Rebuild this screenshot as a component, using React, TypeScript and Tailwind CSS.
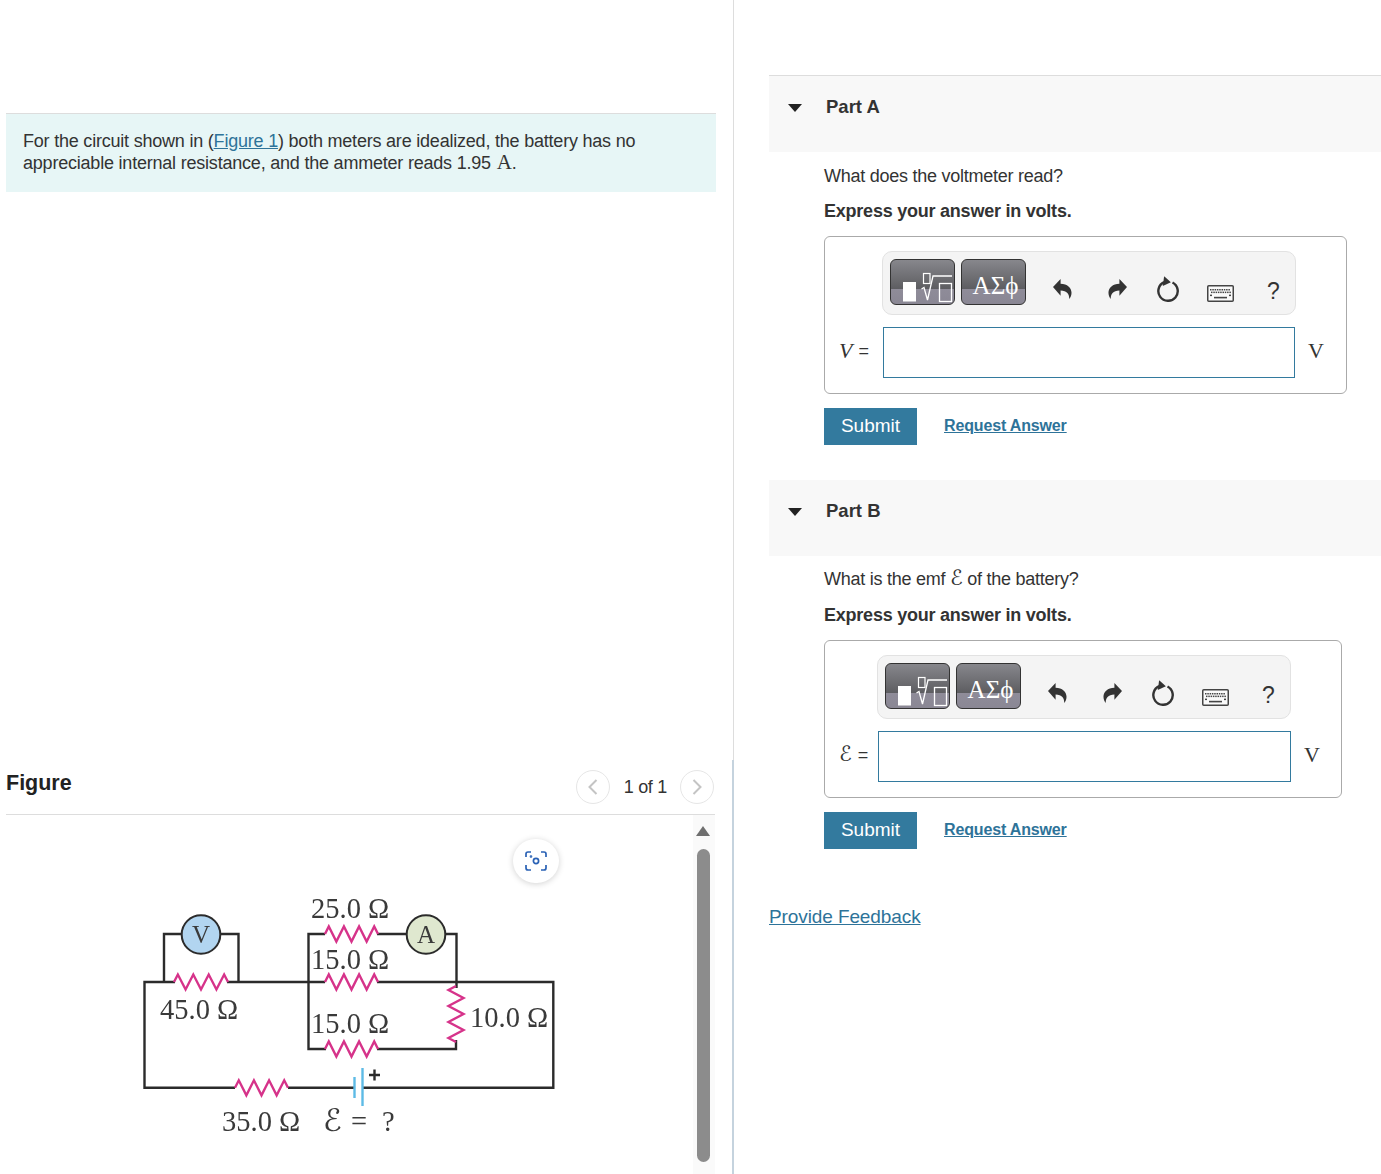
import React from "react";

const sans = "font-['Liberation_Sans',Arial,sans-serif]";
const serif = "font-['Liberation_Serif','DejaVu_Serif',serif]";
const script = "font-['DejaVu_Sans',serif]";

function zig(x0: number, x1: number, y: number, amp = 7.5) {
  const n = 7;
  const step = (x1 - x0) / n;
  let d = `M${x0} ${y}`;
  for (let i = 0; i < n; i++) {
    const x = x0 + step * (i + 0.5);
    d += ` L${x} ${i % 2 === 0 ? y - amp : y + amp}`;
  }
  d += ` L${x1} ${y}`;
  return d;
}
function vzig(y0: number, y1: number, x: number, amp = 7.5) {
  const n = 7;
  const step = (y1 - y0) / n;
  let d = `M${x} ${y0}`;
  for (let i = 0; i < n; i++) {
    const y = y0 + step * (i + 0.5);
    d += ` L${i % 2 === 0 ? x - amp : x + amp} ${y}`;
  }
  d += ` L${x} ${y1}`;
  return d;
}

function Circuit() {
  const wire = { stroke: "#2b2b2b", strokeWidth: 2.4, fill: "none" };
  const res = { stroke: "#d6338a", strokeWidth: 2.4, fill: "none" };
  const label = { fontFamily: "'Liberation Serif', serif", fontSize: 28.5, fill: "#3a3a3a" };
  return (
    <svg width="440" height="270" viewBox="0 0 440 270" className="block blur-[0.35px]">
      <path d="M45 102 H14.5 V207.8 H105 M158 207.8 H224 M232.5 207.8 H423.3 V102 H247" {...wire} />
      <path d="M97 102 H195 M34 102 V54 H52 M90 54 H108.5 V102" {...wire} />
      <path d="M195 54 H178.5 V169 H196 M247 169 H326 V160 M247 54 H277 M315 54 H326.5 V108" {...wire} />
      <path d={zig(44, 98, 102)} {...res} />
      <path d={zig(195, 248, 54)} {...res} />
      <path d={zig(195, 248, 102)} {...res} />
      <path d={zig(195, 248, 169)} {...res} />
      <path d={zig(105, 158, 207.8)} {...res} />
      <path d={vzig(106, 162, 326)} {...res} />
      <circle cx="71" cy="54.5" r="19.3" fill="#b2d5f0" stroke="#2b2b2b" strokeWidth="2" />
      <circle cx="296" cy="54.5" r="19.3" fill="#dfe8cf" stroke="#2b2b2b" strokeWidth="2" />
      <text x="71" y="63" textAnchor="middle" {...label} fontSize={25}>V</text>
      <text x="296" y="63" textAnchor="middle" {...label} fontSize={25}>A</text>
      <path d="M224.5 197 V218" stroke="#5dbbe6" strokeWidth="2.4" />
      <path d="M232.5 188 V226" stroke="#5dbbe6" strokeWidth="2.4" />
      <path d="M239 195 H250 M244.5 189.5 V200.5" stroke="#2b2b2b" strokeWidth="2.4" />
      <text x="181" y="38" {...label}>25.0 Ω</text>
      <text x="181" y="89" {...label}>15.0 Ω</text>
      <text x="181" y="153" {...label}>15.0 Ω</text>
      <text x="30" y="139" {...label}>45.0 Ω</text>
      <text x="340" y="147" {...label}>10.0 Ω</text>
      <text x="92" y="251" {...label}>35.0 Ω</text>
      <text x="193" y="251" {...label} fontFamily="'DejaVu Sans', serif" fontSize={31} fontStyle="italic">ℰ</text>
      <text x="221" y="251" {...label}>=</text>
      <text x="252" y="251" {...label}>?</text>
    </svg>
  );
}

function Undo({ flip = false }: { flip?: boolean }) {
  return (
    <svg width="20" height="22" viewBox="0 0 20 22" className={flip ? "-scale-x-100" : ""}>
      <path d="M0 9 L8 0.5 V5.5 C15 5.5 19.5 10 19.5 15 C19.5 17.5 18.5 20 17 21.5 C17.5 16.5 14.5 12.5 8 12.5 V18 Z" fill="#333" />
    </svg>
  );
}
function Reset() {
  return (
    <svg width="24" height="26" viewBox="0 0 24 26">
      <path d="M8.2 6.2 A9.7 9.7 0 1 0 16.5 6.5" fill="none" stroke="#333" strokeWidth="2.4" />
      <path d="M7.5 0.5 L15 5.5 L7.5 10.5 Z" fill="#333" transform="rotate(8 10 5)" />
    </svg>
  );
}
function Keyboard() {
  const cells: React.ReactElement[] = [];
  for (let r = 0; r < 2; r++) {
    for (let c = 0; c < 9; c++) {
      cells.push(<rect key={`${r}-${c}`} x={3 + c * 2.3 + r} y={4 + r * 2.6} width="1.5" height="1.5" fill="#444" />);
    }
  }
  return (
    <svg width="27" height="17" viewBox="0 0 27 17">
      <rect x="0.75" y="0.75" width="25.5" height="15.5" rx="1" fill="#fafafa" stroke="#444" strokeWidth="1.5" />
      {cells}
      <rect x="3" y="9.6" width="2" height="1.5" fill="#444" />
      <rect x="22" y="9.6" width="2" height="1.5" fill="#444" />
      <rect x="7" y="11.8" width="13" height="1.6" fill="#444" />
    </svg>
  );
}

function TemplateBtn({ children }: { children: React.ReactNode }) {
  return (
    <div className="relative h-[46px] w-[65px] shrink-0 overflow-hidden rounded-[6px] border border-[#333] bg-[linear-gradient(#87878c_0%,#5d5d61_66%,#8f8c99_66%,#8a8794_100%)]">
      {children}
    </div>
  );
}

function Toolbar({ ml }: { ml: string }) {
  return (
    <div className={`flex h-[64px] w-[414px] items-start rounded-[10px] border border-[#e2e2e2] bg-[#f4f4f4] pl-[7px] pt-[7px] ${ml}`}>
      <TemplateBtn>
        <svg width="63" height="44" viewBox="0 0 63 44" className="block">
          <rect x="12" y="22" width="13" height="19.5" fill="#fff" />
          <rect x="32.5" y="13.5" width="6.5" height="10" fill="none" stroke="#fff" strokeWidth="1.2" />
          <path d="M30.5 29 L33 27.5 L36.5 40 L42 16 H61" fill="none" stroke="#fff" strokeWidth="1.3" />
          <rect x="48.5" y="23.5" width="12" height="18" fill="none" stroke="#fff" strokeWidth="1.3" />
        </svg>
      </TemplateBtn>
      <div className="ml-[6px]">
        <TemplateBtn>
          <div className={`absolute inset-0 flex items-center justify-center pl-[4px] pt-[7px] text-[25px] leading-none text-white ${serif}`}>ΑΣϕ</div>
        </TemplateBtn>
      </div>
      <div className="ml-[27px] mt-[19px] flex w-[19px] justify-center"><Undo /></div>
      <div className="ml-[36px] mt-[19px] flex w-[19px] justify-center"><Undo flip /></div>
      <div className="ml-[29px] mt-[17px] flex w-[24px] justify-center"><Reset /></div>
      <div className="ml-[27px] mt-[26px] flex w-[27px] justify-center"><Keyboard /></div>
      <div className={`ml-[33px] mt-[17px] w-[12px] text-center text-[23px] leading-[30px] text-[#333] ${sans}`}>?</div>
    </div>
  );
}

function Answer({ symbol, boxW, toolMl, inputW, labelW, symbolFont, symbolSize }: { symbol: string; boxW: string; toolMl: string; inputW: string; labelW: string; symbolFont: string; symbolSize: string }) {
  return (
    <div className={`mt-[14px] h-[158px] rounded-[6px] border border-[#aaaaaa] pt-[14px] ${boxW}`}>
      <Toolbar ml={toolMl} />
      <div className="mt-[12px] flex items-center">
        <div className={`flex items-center pb-[4px] pl-[14px] text-[#333] ${labelW}`}>
          <span className={`${symbolSize} leading-none ${symbolFont}`}>{symbol}</span>
          <span className="ml-[6px] text-[18px] leading-none">=</span>
        </div>
        <div className={`h-[51px] border border-[#337a9e] bg-white ${inputW}`} />
        <div className={`ml-[13px] pb-[4px] text-[22px] leading-none text-[#333] ${serif}`}>V</div>
      </div>
    </div>
  );
}

function PartHeader({ title, className }: { title: string; className: string }) {
  return (
    <div className={`flex items-start bg-[#f8f8f8] pl-[19px] ${className}`}>
      <div className="mt-[28px] h-0 w-0 border-x-[7.5px] border-t-[8px] border-x-transparent border-t-[#222]" />
      <div className="ml-[24px] mt-[18px] text-[18.5px] font-bold leading-[26px] text-[#333]">{title}</div>
    </div>
  );
}

function Actions() {
  return (
    <div className="mt-[14px] flex items-center">
      <div className="flex h-[37px] w-[93px] items-center justify-center bg-[#337a9e] text-[19px] text-white">Submit</div>
      <span className="mb-[2px] ml-[27px] text-[16px] font-bold leading-[20px] tracking-[-0.15px] text-[#2e7399] underline">Request Answer</span>
    </div>
  );
}

function Circle({ children }: { children: React.ReactNode }) {
  return (
    <div className="flex h-[34px] w-[34px] items-center justify-center rounded-full border border-[#e6e6e6] bg-white">
      {children}
    </div>
  );
}

export default function App() {
  return (
    <div className={`flex h-[1174px] w-[1381px] overflow-hidden bg-white text-[#333] ${sans}`}>
      <div className="flex w-[734px] shrink-0 flex-col">
        <div className="h-[760px] border-r border-[#dddddd] pl-[6px] pr-[17px] pt-[113px]">
          <div className="h-[79px] border-t border-[#dddddd] bg-[#e7f6f6] px-[17px] pt-[16px] text-[18px] leading-[22px] tracking-[-0.21px]">
            For the circuit shown in (<span className="text-[#2e7399] underline">Figure 1</span>) both meters are idealized, the battery has no
            <br />
            appreciable internal resistance, and the ammeter reads 1.95 <span className={`ml-[1px] text-[21px] leading-none tracking-normal ${serif}`}>A</span>.
          </div>
        </div>
        <div className="flex flex-1 flex-col border-r-2 border-r-[#c5d3de] pl-[6px] pr-[17px]">
          <div className="flex h-[55px] items-start justify-between border-b border-[#dddddd] pt-[9px]">
            <div className="mt-[1px] text-[21.5px] font-bold leading-[26px] text-[#222]">Figure</div>
            <div className="mr-[1px] mt-[1px] flex items-center">
              <Circle>
                <svg width="12" height="18" viewBox="0 0 12 18"><path d="M9.5 2 L2.5 9 L9.5 16" fill="none" stroke="#c4c4c4" strokeWidth="2" /></svg>
              </Circle>
              <span className="ml-[14px] mr-[13px] text-[18px] tracking-[-0.3px] text-[#333]">1 of 1</span>
              <Circle>
                <svg width="12" height="18" viewBox="0 0 12 18"><path d="M2.5 2 L9.5 9 L2.5 16" fill="none" stroke="#c4c4c4" strokeWidth="2" /></svg>
              </Circle>
            </div>
          </div>
          <div className="relative flex flex-1">
            <div className="flex-1 pl-[124px] pt-[65px]">
              <Circuit />
            </div>
            <div className="absolute left-[507px] top-[24px] flex h-[44px] w-[46px] items-center justify-center rounded-full bg-white shadow-[0_1px_6px_rgba(0,0,0,0.18)]">
              <svg width="22" height="20" viewBox="0 0 22 20" fill="none" stroke="#2a62b5" strokeWidth="1.7">
                <path d="M1 6 V3 Q1 1 3 1 H6 M16 1 H19 Q21 1 21 3 V6 M21 14 V17 Q21 19 19 19 H16 M6 19 H3 Q1 19 1 17 V14" />
                <circle cx="11" cy="10" r="2.6" />
                <circle cx="6" cy="5.5" r="0.5" />
              </svg>
            </div>
            <div className="flex w-[22px] shrink-0 flex-col items-center bg-[#fafafa] pr-[2px] pt-[11px]">
              <div className="h-0 w-0 border-x-[7px] border-b-[10px] border-x-transparent border-b-[#6f6f6f]" />
              <div className="mt-[13px] h-[313px] w-[13px] rounded-full bg-[#8c8c8c]" />
            </div>
          </div>
        </div>
      </div>
      <div className="flex-1 pl-[35px] pt-[75px]">
        <PartHeader title="Part A" className="h-[77px] border-t border-[#dddddd]" />
        <div className="pl-[55px] pr-[34px]">
          <div className="mt-[13px] text-[18px] leading-[22px] tracking-[-0.25px]">What does the voltmeter read?</div>
          <div className="mt-[13px] text-[18px] font-bold leading-[22px] tracking-[-0.23px]">Express your answer in volts.</div>
          <Answer symbol="V" symbolFont={`italic ${serif}`} symbolSize="text-[22px]" boxW="w-[523px]" toolMl="ml-[57px]" inputW="w-[412px]" labelW="w-[58px]" />
          <Actions />
        </div>
        <PartHeader title="Part B" className="mt-[35px] h-[76px]" />
        <div className="pl-[55px] pr-[34px]">
          <div className="mt-[12px] h-[22px] text-[18px] leading-[22px] tracking-[-0.25px]">
            What is the emf <span className={`text-[21px] italic leading-none ${script}`}>ℰ</span> of the battery?
          </div>
          <div className="mt-[14px] text-[18px] font-bold leading-[22px] tracking-[-0.23px]">Express your answer in volts.</div>
          <Answer symbol="ℰ" symbolFont={`italic ${script}`} symbolSize="text-[21px]" boxW="w-[518px]" toolMl="ml-[52px]" inputW="w-[413px]" labelW="w-[53px]" />
          <Actions />
        </div>
        <div className="mt-[56px] text-[19px] leading-[24px] tracking-[-0.1px] text-[#2e7399] underline">Provide Feedback</div>
      </div>
    </div>
  );
}
